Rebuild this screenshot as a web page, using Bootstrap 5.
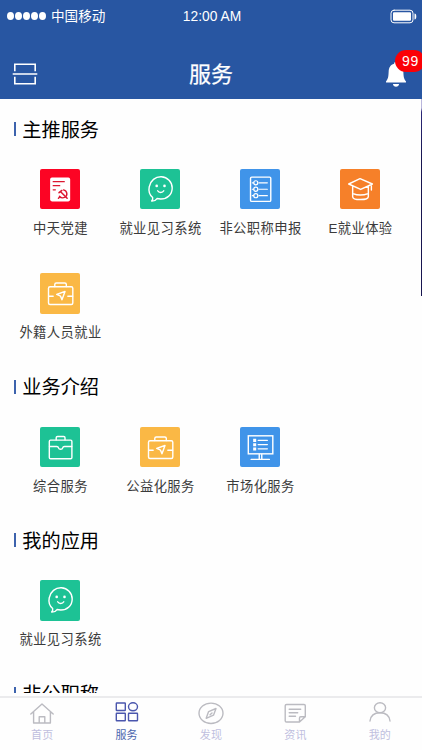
<!DOCTYPE html>
<html lang="zh-CN">
<head>
<meta charset="utf-8">
<meta name="viewport" content="width=device-width, initial-scale=1">
<title>服务</title>
<link href="https://cdn.jsdelivr.net/npm/bootstrap@5.3.0/dist/css/bootstrap.min.css" rel="stylesheet">
<style>
body{font-family:"Liberation Sans","Noto Sans CJK SC",sans-serif;background:#fefefe;color:#000}
svg{display:block;fill:none;stroke:currentColor;stroke-width:1.4;stroke-linecap:round;stroke-linejoin:round}
.app-head{height:99px;background:#2856a2}
.status{height:32px;padding:0 5px 0 7px;font-size:14px;line-height:32px}
.status-side{flex:1 1 0}
.dots{gap:1px}
.dot{width:7px;height:8px;border-radius:50%;background:#fff}
.carrier{font-size:13.6px;margin-left:5px;padding-top:1px}
.clock{display:inline-block;transform:scaleY(1.1);font-size:13.8px;padding-top:1px}
.bar{height:67px;padding:9px 12px 0}
.scan{stroke-linecap:butt;stroke-linejoin:miter}
.bar-title{font-size:22px;line-height:32px;padding-top:10px;font-weight:400;-webkit-text-stroke:.25px #fff}
.bell{width:24px;height:26px;margin-top:7px;margin-right:2px}
.bell svg{transform:scaleX(.94)}
.count{position:absolute;left:11px;top:-11px;width:30px;height:22px;border-radius:11px;background:#fb0006;font-size:14px;line-height:23px;padding-left:1px;letter-spacing:.6px}
.list-area{padding-top:6px}
.sec-title{height:49.4px;padding-left:14px;padding-top:2px;font-size:19.2px;line-height:28px}
.tick{width:1.7px;height:14px;background:#3d63ad;margin-right:6.6px;margin-top:-3px}
.tiles{padding:0 10px}
.tile{width:100px;height:104.1px;padding-top:14.6px}
.tile-icon{width:40.5px;height:40.5px;border-radius:2px;color:#fff}
.tile-label{font-size:13.3px;letter-spacing:.4px;line-height:20px;margin-top:9.5px;padding-left:1px;color:#3b3b3b;white-space:nowrap}
.red{background:#fc0424}.green{background:#1dc295}.blue{background:#4094e9}.orange{background:#f68029}.amber{background:#fab845}
.scroll-thumb{position:absolute;right:0;top:0;width:1.5px;height:197px;background:linear-gradient(#b9b6dc 0,#b9b6dc 9px,#2b2878 13px,#181650 60px)}
.tabs{height:57px;padding-top:3px;background:#fefefe;color:#bbbbc1}
.tabs-line{border-top:2px solid #ebebed}
.tab{flex:1 1 0;padding-top:3px}
.tab-label{font-size:11px;line-height:16px;color:#c0bfdf;margin-top:2px;letter-spacing:.2px}
.tab.current{color:#4a56ad}.tab.current .tab-label{color:#4a65ad}
</style>
<script src="https://cdn.jsdelivr.net/npm/bootstrap@5.3.0/dist/js/bootstrap.bundle.min.js"></script>
</head>
<body class="vh-100 overflow-hidden d-flex flex-column">
<svg class="d-none">
<symbol id="chat" viewBox="0 0 40 40"><path d="M12.5 28.2C9.4 25.4 8.3 21.5 9.1 17.6C10.3 11.5 15.2 7.5 21 7.7C27.2 8 31.8 12.8 31.8 18.8C31.8 25.3 26.8 29.8 20.4 29.7L16.8 29.2C15.6 31 13.6 31.8 11.5 31.7C12.5 30.6 12.8 29.5 12.5 28.2Z"/><path d="M17.4 21.5C18.7 23.8 22.2 23.8 23.5 21.5"/><g fill="currentColor" stroke="none"><circle cx="16.5" cy="16.7" r="1.3"/><circle cx="24.2" cy="16.7" r="1.3"/></g></symbol>
<symbol id="case-arrow" viewBox="0 0 40 40"><rect x="8.4" y="13.6" width="24" height="17.5" rx="1.5"/><path d="M14.6 13.3V11.4Q14.6 9.9 16.1 9.9H24.5Q26 9.9 26 11.4V13.3M8.6 23H13M27.5 23H32.2M16.5 21.2L24.7 18.2L21.7 26.4L20.3 22.9Z"/></symbol>
</svg>

<header class="app-head text-white flex-shrink-0">
  <div class="status d-flex align-items-center">
    <div class="status-side d-flex align-items-center"><div class="dots d-flex align-items-center"><i class="dot"></i><i class="dot"></i><i class="dot"></i><i class="dot"></i><i class="dot"></i></div><span class="carrier">中国移动</span></div>
    <span class="clock">12:00 AM</span>
    <div class="status-side d-flex justify-content-end"><svg width="27" height="15" viewBox="0 0 27 15"><rect x="1" y="1.2" width="22" height="12.6" rx="3" stroke-width="1"/><rect x="3" y="3.2" width="18" height="8.6" rx="1" fill="#fff" stroke="none"/><path d="M24.5 4.5Q26.3 4.5 26.3 7.5T24.5 10.5Z" fill="#fff" stroke="none"/></svg></div>
  </div>
  <div class="bar d-flex align-items-center justify-content-between">
    <svg class="scan mt-2" width="26" height="24" viewBox="0 0 26 24"><path d="M2.8 9.2V2.2H23.2V9.2M.7 12H25.3M2.8 14.8V21.8H23.2V14.8" stroke-width="1.6"/></svg>
    <h1 class="bar-title m-0">服务</h1>
    <div class="bell position-relative"><svg width="24" height="26" viewBox="0 0 24 26"><path d="M12 .8C10.7.8 10 1.7 10 2.7C6.2 3.6 4.4 6.6 4.2 10.3C4 15.5 3.6 18.2 1.4 20.3V21.6H22.6V20.3C20.4 18.2 20 15.5 19.8 10.3C19.6 6.6 17.8 3.6 14 2.7C14 1.7 13.3.8 12 .8ZM8.7 23H15.3Q14.7 25.8 12 25.8T8.7 23Z" fill="#fff" stroke="none"/></svg><span class="count text-center">99</span></div>
  </div>
</header>

<main class="list-area flex-grow-1 overflow-hidden position-relative">
  <div class="scroll-thumb"></div>
  <section>
    <h2 class="sec-title d-flex align-items-center m-0 fw-normal"><i class="tick"></i><span>主推服务</span></h2>
    <div class="tiles d-flex flex-wrap">
      <div class="tile d-flex flex-column align-items-center">
        <div class="tile-icon red"><svg viewBox="0 0 40 40"><rect x="10" y="8.5" width="19.8" height="23.5" rx="1.8" fill="#fff" stroke="none"/><g stroke="#dc1730"><path d="M13 12.5H24M13 16.5H19.5M13 20.6H15.2" stroke-width="1.2"/><path d="M23.2 20.6C27 21.4 27.6 26 24.7 27.8C22.5 29 20.4 28.3 19.2 26.9M18.2 29L19.6 27.6" stroke-width="1.4"/><path d="M18.8 23.4L21.6 21.2M20.4 22.5L26.8 28.9" stroke-width="1.5"/></g></svg></div>
        <div class="tile-label">中天党建</div>
      </div>
      <div class="tile d-flex flex-column align-items-center">
        <div class="tile-icon green"><svg viewBox="0 0 40 40"><use href="#chat"/></svg></div>
        <div class="tile-label">就业见习系统</div>
      </div>
      <div class="tile d-flex flex-column align-items-center">
        <div class="tile-icon blue"><svg viewBox="0 0 40 40"><rect x="10.4" y="8" width="20" height="24" rx="1.2"/><g stroke-width="1.2"><circle cx="15.6" cy="13.6" r="2"/><circle cx="15.6" cy="20" r="2"/><circle cx="15.6" cy="26.4" r="2"/><path d="M12.2 13.6H13.4M12.2 20H13.4M12.2 26.4H13.4M18.8 13.6H27M18.8 20H27M18.8 26.4H27"/></g></svg></div>
        <div class="tile-label">非公职称申报</div>
      </div>
      <div class="tile d-flex flex-column align-items-center">
        <div class="tile-icon orange"><svg viewBox="0 0 40 40"><path d="M8.6 14.8L19.8 9.5L32 14.8L20.4 20.2ZM12.5 17V27.3Q12.5 30.2 20.2 30.2T28 27.3V17M12.8 24.3Q20 27.2 27.8 24.3M31 15.5V20.8"/></svg></div>
        <div class="tile-label">E就业体验</div>
      </div>
      <div class="tile d-flex flex-column align-items-center">
        <div class="tile-icon amber"><svg viewBox="0 0 40 40"><use href="#case-arrow"/></svg></div>
        <div class="tile-label">外籍人员就业</div>
      </div>
    </div>
  </section>
  <section>
    <h2 class="sec-title d-flex align-items-center m-0 fw-normal"><i class="tick"></i><span>业务介绍</span></h2>
    <div class="tiles d-flex flex-wrap">
      <div class="tile d-flex flex-column align-items-center">
        <div class="tile-icon green"><svg viewBox="0 0 40 40"><rect x="9.2" y="13" width="22.3" height="18.4" rx="1.2"/><path d="M16 12.7V10.6Q16 9.3 17.3 9.3H23.4Q24.7 9.3 24.7 10.6V12.7M9.4 19.3H16.5Q18 19.3 18.4 20.8Q18.7 22 20.4 22T22.3 20.8Q22.7 19.3 24.2 19.3H31.3"/></svg></div>
        <div class="tile-label">综合服务</div>
      </div>
      <div class="tile d-flex flex-column align-items-center">
        <div class="tile-icon amber"><svg viewBox="0 0 40 40"><use href="#case-arrow"/></svg></div>
        <div class="tile-label">公益化服务</div>
      </div>
      <div class="tile d-flex flex-column align-items-center">
        <div class="tile-icon blue"><svg viewBox="0 0 40 40"><g stroke-linejoin="miter"><rect x="8.2" y="8.7" width="24.2" height="17.8"/><path d="M18 13.2H27M18 17.4H27M18 21.6H27M19 27V31.6M21.5 27V31.6M11 32H29"/></g><path d="M13 11.7H16V14.7H13ZM13 16H16V19H13ZM13 20.2H16V23.2H13Z" fill="#fff" stroke="none"/></svg></div>
        <div class="tile-label">市场化服务</div>
      </div>
    </div>
  </section>
  <section>
    <h2 class="sec-title d-flex align-items-center m-0 fw-normal"><i class="tick"></i><span>我的应用</span></h2>
    <div class="tiles d-flex flex-wrap">
      <div class="tile d-flex flex-column align-items-center">
        <div class="tile-icon green"><svg viewBox="0 0 40 40"><use href="#chat"/></svg></div>
        <div class="tile-label">就业见习系统</div>
      </div>
    </div>
  </section>
  <section>
    <h2 class="sec-title d-flex align-items-center m-0 fw-normal"><i class="tick"></i><span>非公职称</span></h2>
  </section>
</main>

<nav class="tabs flex-shrink-0">
 <div class="tabs-line d-flex">
  <div class="tab d-flex flex-column align-items-center"><svg width="26" height="24" viewBox="0 0 26 24"><path d="M1.8 13L13 3L24.2 13M4.6 11V22H21.4V11M10.2 22V15.8H15.8V22"/></svg><span class="tab-label">首页</span></div>
  <div class="tab current d-flex flex-column align-items-center"><svg width="26" height="24" viewBox="0 0 26 24"><rect x="2.3" y="2" width="9" height="7.5" rx=".5"/><ellipse cx="19" cy="5.8" rx="4.5" ry="4"/><rect x="2.3" y="12.3" width="9" height="7.5" rx=".5"/><rect x="14.5" y="12.3" width="9" height="7.5" rx=".5"/></svg><span class="tab-label">服务</span></div>
  <div class="tab d-flex flex-column align-items-center"><svg width="26" height="24" viewBox="0 0 26 24"><ellipse cx="13" cy="12.3" rx="12" ry="10.2"/><path d="M18 7.5L15.5 14.2L8.2 17.3L10.6 10.6ZM12 13.7L14 12"/></svg><span class="tab-label">发现</span></div>
  <div class="tab d-flex flex-column align-items-center"><svg width="26" height="24" viewBox="0 0 26 24"><path d="M4.5 3.5H22Q23.3 3.5 23.3 4.8V15.8L17.5 21H4.5Q3.2 21 3.2 19.7V4.8Q3.2 3.5 4.5 3.5ZM17.5 20.5V17Q17.5 15.8 18.7 15.8H23M7.2 8.3H18.7M7.2 11.8H15.7M7.2 15.3H13.5"/></svg><span class="tab-label">资讯</span></div>
  <div class="tab d-flex flex-column align-items-center"><svg width="26" height="24" viewBox="0 0 26 24"><ellipse cx="13" cy="6.8" rx="5.6" ry="5"/><path d="M3 20Q4 11.8 13 11.8T23 20"/></svg><span class="tab-label">我的</span></div>
 </div>
</nav>
</body>
</html>
